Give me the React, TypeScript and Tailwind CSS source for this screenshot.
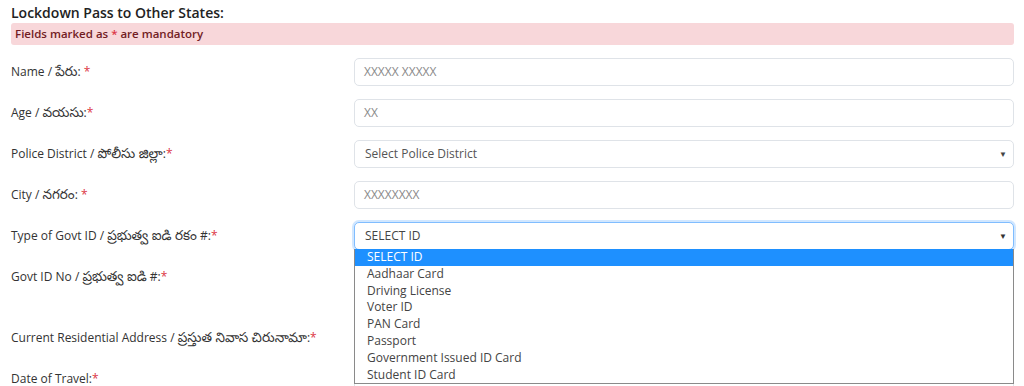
import React from "react";

const font = { fontFamily: '"Open Sans", "Noto Sans", "Noto Sans Telugu", sans-serif' };

function Star() {
  return <span className="text-[#dc3545]">*</span>;
}

function Te({ children }: { children: React.ReactNode }) {
  return <span className="text-[13.5px] leading-[12px]">{children}</span>;
}

function Row({ label, children, className = "" }: { label: React.ReactNode; children?: React.ReactNode; className?: string }) {
  return (
    <div className={`flex items-center h-[28px] ${className}`}>
      <div className="w-[343px] shrink-0 text-[12px] text-[#333]">{label}</div>
      <div className="flex-1 h-full">{children}</div>
    </div>
  );
}

function Input({ placeholder }: { placeholder?: string }) {
  return (
    <div className="h-full w-full rounded-[5px] border border-[#dfe3e8] bg-white flex items-center px-[9px] text-[12px] text-[#8a8a8a]">
      {placeholder}
    </div>
  );
}

function Select({ value }: { value: string }) {
  return (
    <div className="h-full w-full rounded-[5px] border border-[#dfe3e8] bg-white flex items-center justify-between pl-[10px] pr-[6px] text-[12px] text-[#555]">
      <span>{value}</span>
      <span className="text-[8px] text-[#444]">▼</span>
    </div>
  );
}

const options = [
  "SELECT ID",
  "Aadhaar Card",
  "Driving License",
  "Voter ID",
  "PAN Card",
  "Passport",
  "Government Issued ID Card",
  "Student ID Card",
];

export default function App() {
  return (
    <div className="w-[1024px] h-[386px] overflow-hidden bg-white px-[11px] pr-[10px] pt-[3px]" style={font}>
      <div className="h-[19px] text-[14px] leading-[19px] font-semibold text-[#222]">Lockdown Pass to Other States:</div>
      <div className="mt-[1px] h-[22px] rounded-[3px] bg-[#f8d7da] text-[#721c24] text-[11.5px] font-semibold px-[4px] flex items-center">
        <span>
          Fields marked as <Star /> are mandatory
        </span>
      </div>
      <div className="mt-[13px] flex flex-col gap-[13px]">
        <Row label={<>Name / <Te>పేరు</Te>: <Star /></>}>
          <Input placeholder="XXXXX XXXXX" />
        </Row>
        <Row label={<>Age / <Te>వయసు</Te>:<Star /></>}>
          <Input placeholder="XX" />
        </Row>
        <Row label={<>Police District / <Te>పోలీసు జిల్లా</Te>:<Star /></>}>
          <Select value="Select Police District" />
        </Row>
        <Row label={<>City / <Te>నగరం</Te>: <Star /></>}>
          <Input placeholder="XXXXXXXX" />
        </Row>
        <Row label={<>Type of Govt ID / <Te>ప్రభుత్వ ఐడి రకం</Te> #:<Star /></>}>
          <div className="relative h-full">
            <div className="h-full w-full rounded-[5px] border border-[#80bdff] shadow-[0_0_0_2px_rgba(0,123,255,0.18)] bg-white flex items-center justify-between pl-[10px] pr-[6px] text-[12px] text-[#444]">
              <span>SELECT ID</span>
              <span className="text-[8px] text-[#333]">▼</span>
            </div>
            <div className="absolute left-0 right-0 top-[27px] z-10 bg-white border border-[#8a8a8a] border-t-0 text-[12px] text-[#444]">
              {options.map((o, i) => (
                <div
                  key={o}
                  className={`h-[16.8px] leading-[16.8px] pl-[12px] ${i === 0 ? "bg-[#1e90ff] text-white" : ""}`}
                >
                  {o}
                </div>
              ))}
            </div>
          </div>
        </Row>
        <Row label={<>Govt ID No / <Te>ప్రభుత్వ ఐడి</Te> #:<Star /></>}>
          <Input />
        </Row>
        <Row className="mt-[20px]" label={<>Current Residential Address / <Te>ప్రస్తుత నివాస చిరునామా</Te>:<Star /></>}>
          <Input />
        </Row>
        <Row label={<>Date of Travel:<Star /></>}>
          <Input />
        </Row>
      </div>
    </div>
  );
}
